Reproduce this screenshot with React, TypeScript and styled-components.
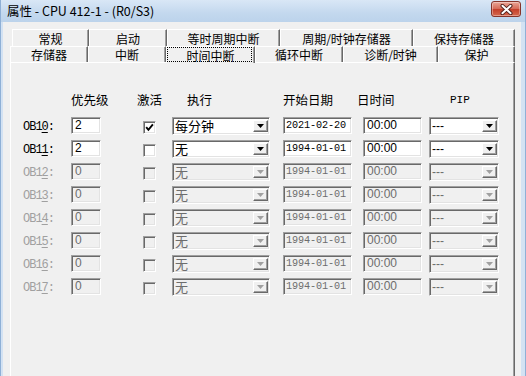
import React from "react";
import styled, { createGlobalStyle, css } from "styled-components";

const CJK = `"Noto Sans CJK SC", "Noto Sans", sans-serif`;
const MONO = `"Liberation Mono", "Noto Sans CJK SC", monospace`;
const SANS = `"Liberation Sans", "Noto Sans CJK SC", sans-serif`;

const GlobalStyle = createGlobalStyle`
  html, body {
    margin: 0;
    padding: 0;
    background: #f0f0f0;
    overflow: hidden;
  }
`;

type TabDef = { label: string; w: number; active?: boolean };

const BACK_TABS: TabDef[] = [
    { label: "常规", w: 77 },
    { label: "启动", w: 78 },
    { label: "等时周期中断", w: 113 },
    { label: "周期/时钟存储器", w: 133 },
    { label: "保持存储器", w: 102 },
];

const FRONT_TABS: TabDef[] = [
    { label: "存储器", w: 78 },
    { label: "中断", w: 78 },
    { label: "时间中断", w: 89, active: true },
    { label: "循环中断", w: 88 },
    { label: "诊断/时钟", w: 95 },
    { label: "保护", w: 77 },
];

type ObRow = {
    nr: number;
    prio: string;
    active: boolean;
    exec: string;
    date: string;
    time: string;
    pip: string;
    enabled: boolean;
};

const ROWS: ObRow[] = [
    { nr: 10, prio: "2", active: true, exec: "每分钟", date: "2021-02-20", time: "00:00", pip: "---", enabled: true },
    { nr: 11, prio: "2", active: false, exec: "无", date: "1994-01-01", time: "00:00", pip: "---", enabled: true },
    ...[12, 13, 14, 15, 16, 17].map((nr) => ({
        nr,
        prio: "0",
        active: false,
        exec: "无",
        date: "1994-01-01",
        time: "00:00",
        pip: "---",
        enabled: false,
    })),
];

// header offsets inside their grid column
const HEADERS: { text: string; pad: number; mono?: boolean }[] = [
    { text: "", pad: 0 },
    { text: "优先级", pad: 0 },
    { text: "激活", pad: 36 },
    { text: "执行", pad: 15 },
    { text: "开始日期", pad: 13 },
    { text: "日时间", pad: 5 },
    { text: "PIP", pad: 28, mono: true },
];

const ComboBox: React.FC<{ value: string; width: number; disabled: boolean; sans?: boolean }> = ({
    value,
    width,
    disabled,
    sans,
}) => (
    <Combo $w={width} $disabled={disabled}>
        <ComboValue $disabled={disabled} $sans={sans}>
            {value}
        </ComboValue>
        <DropButton>
            <svg width="7" height="4" viewBox="0 0 7 4">
                <path d="M0 0 H7 L3.5 4 Z" fill={disabled ? "#a0a0a0" : "#000"} />
            </svg>
        </DropButton>
    </Combo>
);

export default function App() {
    return (
        <>
            <GlobalStyle />
            <Window>
                <TitleBar>
                    <TitleText>属性 - CPU 412-1 - (R0/S3)</TitleText>
                    <CloseButton>
                        <svg width="13" height="11" viewBox="0 0 13 11">
                            <path d="M2.4 1.8 L10.6 9.2 M10.6 1.8 L2.4 9.2" stroke="#4b1e19" strokeWidth="3.8" strokeLinecap="round" />
                            <path d="M2.4 1.8 L10.6 9.2 M10.6 1.8 L2.4 9.2" stroke="#fff" strokeWidth="2" strokeLinecap="round" />
                        </svg>
                    </CloseButton>
                </TitleBar>
                <Body>
                    <TabRow $back>
                        {BACK_TABS.map((t) => (
                            <Tab key={t.label} $w={t.w}>
                                {t.label}
                            </Tab>
                        ))}
                    </TabRow>
                    <TabRow>
                        {FRONT_TABS.map((t) => (
                            <Tab key={t.label} $w={t.w} $active={t.active}>
                                {t.label}
                            </Tab>
                        ))}
                    </TabRow>
                    <Panel>
                        <ObGrid>
                            {HEADERS.map((h, i) => (
                                <HeaderCell key={i} $pad={h.pad} $mono={h.mono}>
                                    {h.text}
                                </HeaderCell>
                            ))}
                            {ROWS.map((r) => {
                                const s = String(r.nr);
                                return (
                                    <React.Fragment key={r.nr}>
                                        <ObLabel $disabled={!r.enabled}>
                                            OB{s.slice(0, -1)}
                                            <u>{s.slice(-1)}</u>:
                                        </ObLabel>
                                        <Field $w={30} $disabled={!r.enabled}>
                                            {r.prio}
                                        </Field>
                                        <CheckBox $disabled={!r.enabled}>
                                            {r.active && (
                                                <svg width="9" height="9" viewBox="0 0 9 9">
                                                    <path d="M1.2 4.2 L3.4 6.8 L7.9 1.4" stroke="#000" strokeWidth="1.9" fill="none" />
                                                </svg>
                                            )}
                                        </CheckBox>
                                        <ComboBox value={r.exec} width={98} disabled={!r.enabled} />
                                        <Field $w={69} $mono $disabled={!r.enabled} $end>
                                            {r.date}
                                        </Field>
                                        <Field $w={59} $disabled={!r.enabled} $end>
                                            {r.time}
                                        </Field>
                                        <EndCell>
                                            <ComboBox value={r.pip} width={70} disabled={!r.enabled} sans />
                                        </EndCell>
                                    </React.Fragment>
                                );
                            })}
                        </ObGrid>
                    </Panel>
                </Body>
            </Window>
        </>
    );
}

const Window = styled.div`
    width: 526px;
    height: 376px;
    box-sizing: border-box;
    display: flex;
    flex-direction: column;
    border-left: 1px solid #8fb0d6;
    border-right: 1px solid #8fb0d6;
    overflow: hidden;
`;

const TitleBar = styled.div`
    height: 22px;
    flex-shrink: 0;
    display: flex;
    align-items: center;
    justify-content: space-between;
    padding: 0 4px 0 6px;
    background: linear-gradient(#d9e7f6, #c3d8ee 60%, #bcd3eb);
`;

const TitleText = styled.span`
    font-family: ${CJK};
    font-size: 12.5px;
    color: #000;
    line-height: 22px;
`;

const CloseButton = styled.div`
    align-self: flex-start;
    margin-top: 1px;
    width: 30px;
    height: 16px;
    box-sizing: border-box;
    border: 1px solid #86342a;
    border-radius: 3px;
    background: linear-gradient(#e9a596, #d66b58 48%, #c43f2a 52%, #d5694f);
    box-shadow: inset 0 0 0 1px rgba(255, 255, 255, 0.35);
    display: flex;
    align-items: center;
    justify-content: center;
`;

const Body = styled.div`
    flex: 1;
    display: flex;
    flex-direction: column;
    background: #f0f0f0;
    border-left: 2px solid #d3e2f3;
    border-right: 4px solid #d3e2f3;
    padding: 7px 6px 0 7px;
    min-height: 0;
`;

const TabRow = styled.div<{ $back?: boolean }>`
    display: flex;
    height: ${(p) => (p.$back ? 17 : 16)}px;
    padding-left: ${(p) => (p.$back ? 2 : 0)}px;
    flex-shrink: 0;
`;

const Tab = styled.div<{ $w: number; $active?: boolean }>`
    position: relative;
    width: ${(p) => p.$w}px;
    box-sizing: border-box;
    display: flex;
    align-items: center;
    justify-content: center;
    font-family: ${CJK};
    font-size: 12px;
    line-height: 13px;
    color: #000;
    background: #f0f0f0;
    border-top: 1px solid #fff;
    border-left: 1px solid #fff;
    border-right: 1px solid #696969;
    box-shadow: inset -1px 0 #a0a0a0;
    ${(p) =>
        p.$active &&
        css`
            z-index: 1;
            margin-bottom: -1px;
            &::after {
                content: "";
                position: absolute;
                inset: 0 2px 1px 0;
                border: 1px dotted #000;
            }
        `}
`;

const Panel = styled.div`
    flex: 1;
    background: #f0f0f0;
    border-top: 1px solid #fff;
    border-left: 1px solid #fff;
    border-right: 1px solid #696969;
    box-shadow: inset -1px 0 #a0a0a0;
    padding: 29px 0 0 12px;
`;

const ObGrid = styled.div`
    display: grid;
    grid-template-columns: 48px 30px 71px 98px 82px 70px 77px;
    grid-template-rows: 19px;
    grid-auto-rows: 17px;
    row-gap: 6px;
    align-items: start;
`;

const HeaderCell = styled.div<{ $pad: number; $mono?: boolean }>`
    padding-left: ${(p) => p.$pad}px;
    white-space: nowrap;
    font-family: ${(p) => (p.$mono ? MONO : CJK)};
    font-size: ${(p) => (p.$mono ? 11 : 12.5)}px;
    line-height: 16px;
    color: #000;
`;

const ObLabel = styled.div<{ $disabled: boolean }>`
    font-family: ${MONO};
    font-size: 12px;
    line-height: 16px;
    padding-top: 2px;
    letter-spacing: -1px;
    color: ${(p) => (p.$disabled ? "#a0a0a0" : "#000")};
    white-space: nowrap;

    u {
        text-underline-offset: 2px;
    }
`;

const sunken = css`
    box-sizing: border-box;
    border: 1px solid;
    border-color: #a0a0a0 #fff #fff #a0a0a0;
    box-shadow: inset 1px 1px #696969, inset -1px -1px #e3e3e3;
`;

const Field = styled.div<{ $w: number; $disabled: boolean; $mono?: boolean; $end?: boolean }>`
    ${sunken};
    width: ${(p) => p.$w}px;
    height: 17px;
    justify-self: ${(p) => (p.$end ? "end" : "start")};
    padding: 0 0 0 ${(p) => (p.$mono ? 2 : 3)}px;
    overflow: hidden;
    white-space: nowrap;
    background: ${(p) => (p.$disabled ? "#f0f0f0" : "#fff")};
    color: ${(p) => (p.$disabled ? "#6d6d6d" : "#000")};
    font-family: ${(p) => (p.$mono ? MONO : SANS)};
    font-size: ${(p) => (p.$mono ? 10.2 : 12)}px;
    letter-spacing: ${(p) => (p.$mono ? "-0.1px" : "0")};
    line-height: 15px;
`;

const CheckBox = styled.div<{ $disabled: boolean }>`
    ${sunken};
    width: 13px;
    height: 13px;
    margin: 4px 0 0 42px;
    background: ${(p) => (p.$disabled ? "#f0f0f0" : "#fff")};
    display: flex;
    align-items: center;
    justify-content: center;
`;

const EndCell = styled.div`
    justify-self: end;
`;

const Combo = styled.div<{ $w: number; $disabled: boolean }>`
    ${sunken};
    width: ${(p) => p.$w}px;
    height: 18px;
    display: flex;
    padding: 1px 1px 2px 2px;
    background: ${(p) => (p.$disabled ? "#f0f0f0" : "#fff")};
`;

const ComboValue = styled.span<{ $disabled: boolean; $sans?: boolean }>`
    flex: 1;
    font-family: ${(p) => (p.$sans ? SANS : CJK)};
    font-size: ${(p) => (p.$sans ? 12 : 13)}px;
    line-height: 14px;
    color: ${(p) => (p.$disabled ? "#6d6d6d" : "#000")};
    white-space: nowrap;
`;

const DropButton = styled.div`
    align-self: flex-end;
    width: 15px;
    height: 12px;
    box-sizing: border-box;
    background: #f0f0f0;
    border: 1px solid;
    border-color: #fff #696969 #696969 #fff;
    box-shadow: inset -1px -1px #a0a0a0;
    display: flex;
    align-items: center;
    justify-content: center;
`;
